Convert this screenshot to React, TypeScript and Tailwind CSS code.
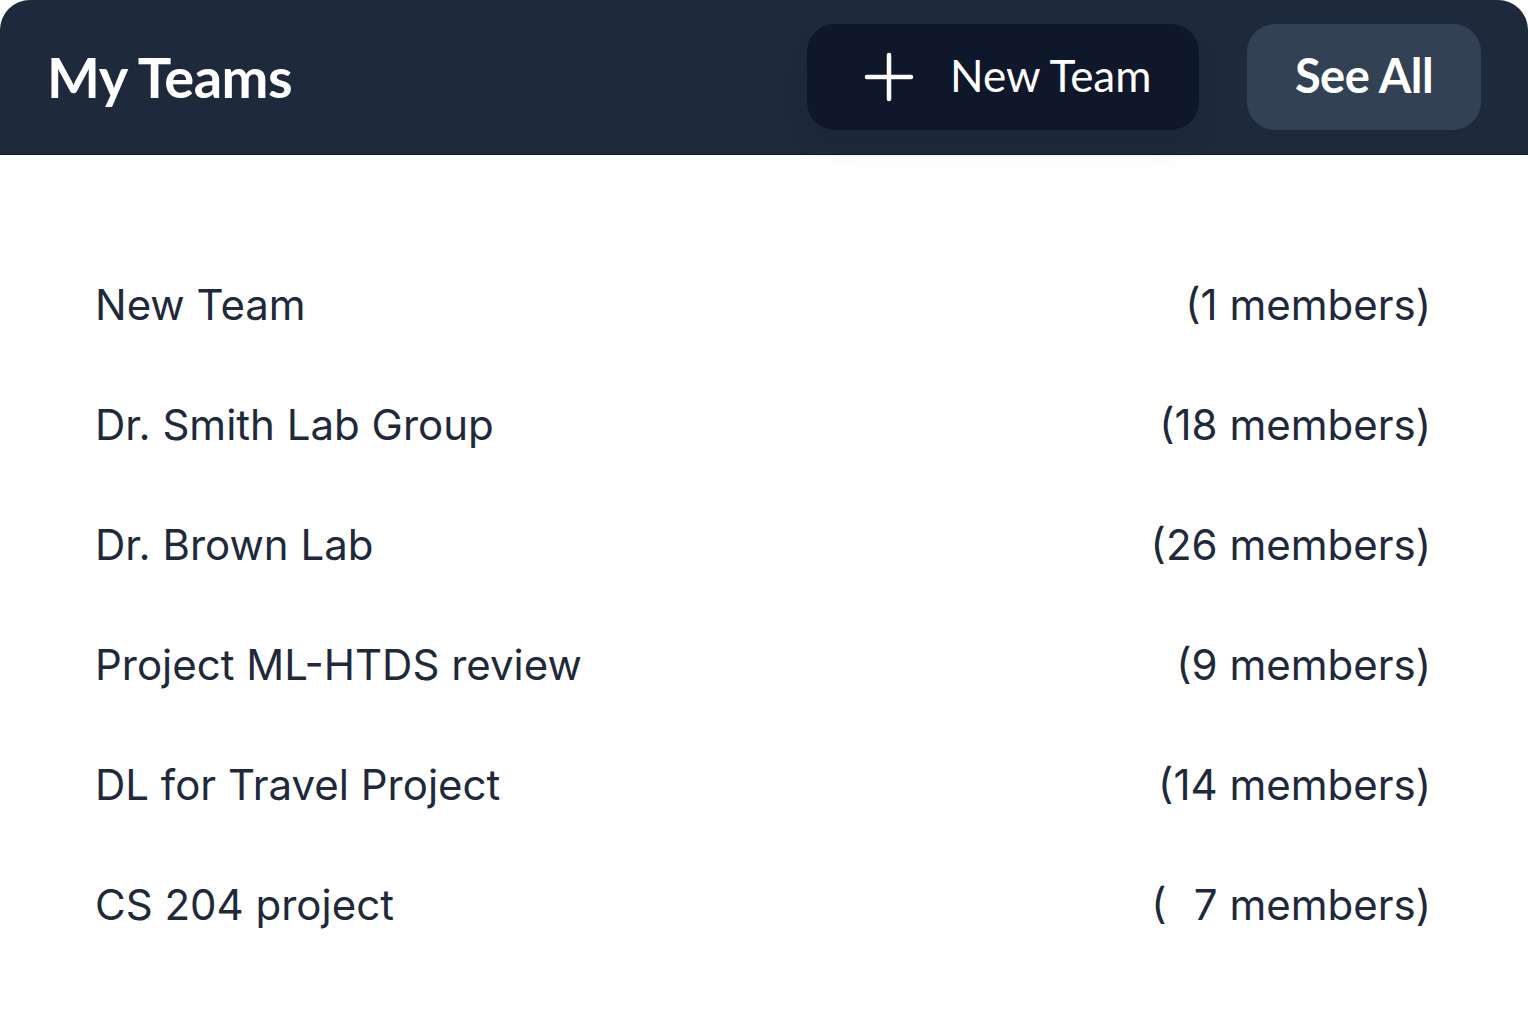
import React from "react";

const teams = [
  { name: "New Team", count: "1" },
  { name: "Dr. Smith Lab Group", count: "18" },
  { name: "Dr. Brown Lab", count: "26" },
  { name: "Project ML-HTDS review", count: "9" },
  { name: "DL for Travel Project", count: "14" },
  { name: "CS 204 project", count: "\u20077" },
];

export default function App() {
  return (
    <div className="w-[1528px] h-[1023px] bg-white overflow-hidden">
      <div className="relative z-10 h-[155px] bg-[#1e293b] rounded-t-[30px] border-b border-[#0f172a] flex items-center pl-[47px] pr-[47px]">
        <h1
          className="text-white font-bold text-[56px] tracking-[-0.5px] leading-none"
          style={{ fontFamily: "Lato, 'Noto Sans', sans-serif" }}
        >
          My Teams
        </h1>
        <div className="ml-auto flex items-center gap-[48px]">
          <button
            className="h-[106px] w-[392px] rounded-[28px] bg-[#0f172a] flex items-center pl-[57px] gap-[36px] shadow-[0_18px_30px_-8px_rgba(15,23,42,0.18)]"
            style={{ fontFamily: "Lato, 'Noto Sans', sans-serif" }}
          >
            <svg width="50" height="50" viewBox="0 0 50 50" fill="none">
              <path d="M25 3v44M3 25h44" stroke="white" strokeWidth="4.5" strokeLinecap="round" />
            </svg>
            <span className="text-white text-[44px] font-normal leading-none -mt-[4px]">New Team</span>
          </button>
          <button
            className="h-[106px] w-[234px] rounded-[28px] bg-[#334155] flex items-center justify-center"
            style={{ fontFamily: "Lato, 'Noto Sans', sans-serif" }}
          >
            <span className="text-white text-[47px] font-bold leading-none tracking-[-0.5px] -mt-[4px]">See All</span>
          </button>
        </div>
      </div>
      <div
        className="pt-[122px] pl-[95px] pr-[97px] flex flex-col"
        style={{ fontFamily: "Inter, 'Noto Sans', sans-serif" }}
      >
        {teams.map((t) => (
          <div key={t.name} className="h-[120px] flex items-start justify-between text-[#1e293b] text-[42px] leading-[56px]">
            <span>{t.name}</span>
            <span>({t.count} members)</span>
          </div>
        ))}
      </div>
    </div>
  );
}
